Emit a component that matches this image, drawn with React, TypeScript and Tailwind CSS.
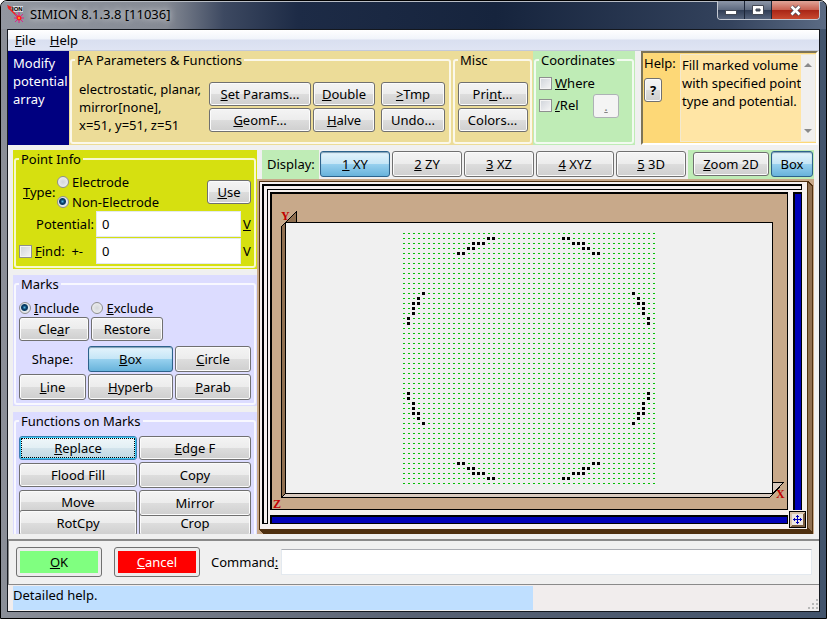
import React from "react";

type BtnProps = {
  children: React.ReactNode;
  className?: string;
  active?: boolean;
  focused?: boolean;
  disabled?: boolean;
};

function Btn({ children, className = "", active, focused, disabled }: BtnProps) {
  let skin =
    "border-[#707070] bg-[linear-gradient(#f4f4f4,#ececec_50%,#dddddd_50%,#cfcfcf)] shadow-[inset_0_0_0_1px_#fbfbfb]";
  if (disabled) skin = "border-[#adb2b5] bg-[#f4f4f4] text-[#838383]";
  if (active)
    skin = "border-[#2c628b] bg-[linear-gradient(#e5f4fc,#c4e5f6_50%,#98d1ef_50%,#68b3db)] shadow-[inset_0_1px_1px_#7f9fb5]";
  if (focused)
    skin =
      "border-[#3c7fb1] bg-[linear-gradient(#f0f7fa,#e2eff4_50%,#d3e4ec_50%,#bfd8e3)] shadow-[inset_0_0_0_1px_#35c8f5] outline-1 outline-offset-[-3px] outline-dotted outline-black";
  return (
    <button
      type="button"
      disabled={disabled}
      className={`flex items-center justify-center whitespace-nowrap rounded-[3px] border ${skin} ${className}`}
    >
      <span>{children}</span>
    </button>
  );
}

function Group({
  title,
  className = "",
  children,
}: {
  title: string;
  className?: string;
  children: React.ReactNode;
}) {
  return (
    <div className={`px-px pb-px ${className}`}>
      <fieldset className="h-full min-w-0 rounded-[3px] border-2 border-white/80 px-[3px]">
        <legend className="px-0.5 leading-[18px]">{title}</legend>
        {children}
      </fieldset>
    </div>
  );
}

function Check({ id, children }: { id: string; children: React.ReactNode }) {
  return (
    <div className="flex items-center gap-[3px]">
      <input
        id={id}
        type="checkbox"
        className="size-[13px] shrink-0 appearance-none border border-[#8e8f8f] bg-[linear-gradient(135deg,#cfd3da,#f6f6f6)] shadow-[inset_0_0_0_1px_#f4f4f4]"
      />
      <label htmlFor={id} className="whitespace-nowrap">
        {children}
      </label>
    </div>
  );
}

function Radio({
  id,
  name,
  on,
  children,
}: {
  id: string;
  name: string;
  on?: boolean;
  children: React.ReactNode;
}) {
  return (
    <div className="flex items-center gap-[3px]">
      <input
        id={id}
        name={name}
        type="radio"
        defaultChecked={on}
        className="size-3 shrink-0 appearance-none rounded-full border border-[#8e8f8f] bg-[radial-gradient(circle,#d4d7db,#f4f4f4)] checked:bg-[radial-gradient(circle_at_45%_45%,#4fb4e0_0,#0b3d66_2px,#0b3d66_3px,#e4e8ec_4px)]"
      />
      <label htmlFor={id} className="whitespace-nowrap">
        {children}
      </label>
    </div>
  );
}

const N = 50;
const arc: [number, number][] = [
  [11, 4], [12, 4], [13, 3], [14, 3], [14, 2], [15, 2], [16, 2], [17, 1], [18, 1],
  [4, 12], [3, 13], [2, 14], [3, 14], [2, 15], [2, 16], [1, 17], [1, 18],
];
const marked = arc.flatMap(([x, y]) => [
  [x, y],
  [N - x, y],
  [x, N - y],
  [N - x, N - y],
]);

function View() {
  return (
    <svg
      viewBox="257 179 557 355"
      className="block w-full"
      shapeRendering="crispEdges"
      role="img"
      aria-label="XY view of the potential array"
    >
      <rect x="257" y="179" width="557" height="355" fill="#c8a98a" />
      <path d="M259 181H809L813 186V534H263L259 529Z" fill="#4f3010" />
      <rect x="260" y="182" width="547" height="347" fill="#f6f0ee" />
      <path d="M808 182L812 187V532L808 528Z" fill="#8f6f50" />
      <path d="M262 184H802V190H268V524H262Z" fill="#000" />
      <path d="M264 186H801V189H267V523H264Z" fill="#f6f0ee" />
      <rect x="270" y="192" width="518" height="318" fill="#000" />
      <rect x="272" y="194" width="515" height="315" fill="#c8a98a" />
      <rect x="793" y="192" width="9" height="318" fill="#000" />
      <rect x="795" y="194" width="6" height="316" fill="#0000b8" />
      <rect x="270" y="515" width="518" height="9" fill="#000" />
      <rect x="272" y="517" width="515" height="6" fill="#0000b8" />

      <rect x="789" y="511" width="17" height="17" fill="#000" />
      <rect x="790" y="512" width="15" height="15" fill="#d9c3ab" />
      <path d="M805 512V527H790L792 525H803V514Z" fill="#7a5c40" />
      <rect x="792" y="514" width="11" height="11" fill="#ece6e2" />
      <path
        d="M797 515h1v9h-1zM793 519h9v1h-9zM796 516h3v1h-3zM796 522h3v1h-3zM794 518h1v3h-1zM800 518h1v3h-1z"
        fill="#0000b8"
      />

      <path d="M281 226L285 222V494L281 498Z" fill="#8f6f50" />
      <path d="M285 222L296 211V222Z" fill="#8f6f50" />
      <path d="M281 498L285 494H773V482H784L769 498Z" fill="#d8cabf" />
      <rect x="285.5" y="222.5" width="487" height="271" fill="#f0f0f0" stroke="#000" />
      <path
        d="M281.5 497.5V226.5L296.5 211.5V222M281.5 497.5H769.5L783.5 482.5H773M281.5 497.5L285.5 493.5"
        fill="none"
        stroke="#000"
      />
      <g fill="#c00000" fontFamily="Liberation Serif, serif" fontWeight="bold" fontSize="12">
        <text x="281" y="220">Y</text>
        <text x="273" y="508">Z</text>
        <text x="776" y="498">X</text>
      </g>
      {Array.from({ length: N + 1 }, (_, j) => (
        <path
          key={j}
          d={`M403 ${233.5 + 5 * j}H655`}
          stroke="#00c000"
          strokeDasharray="2 3"
        />
      ))}
      {marked.map(([x, y]) => (
        <rect key={`${x}-${y}`} x={402 + 5 * x} y={232 + 5 * y} width="3" height="3" fill="#000" />
      ))}
    </svg>
  );
}

function AppIcon() {
  return (
    <svg width="17" height="18" viewBox="0 0 17 18" aria-hidden="true">
      <rect x="6" y="1" width="10" height="6" fill="#d8d8dc" />
      <path d="M1 2L11 12" stroke="#f02020" strokeWidth="1.5" />
      <path d="M0 0L5 2L2 5Z" fill="#f02020" />
      <path d="M12 7V18M7 13H17M8 9L16 17M16 9L8 17" stroke="#e02090" />
      <circle cx="12" cy="13" r="2.5" fill="#ff2020" />
      <circle cx="12" cy="13" r="1" fill="#ffb020" />
      <text x="5" y="6" fontSize="6" fontWeight="bold" fontFamily="Liberation Sans, sans-serif">
        ION
      </text>
    </svg>
  );
}

export default function App() {
  return (
    <div className="flex min-h-screen flex-col overflow-hidden rounded-t-[7px] border border-black bg-[linear-gradient(90deg,#8b8f98,#596273_50%,#42546c)] font-['Noto_Sans',sans-serif] text-[13px] leading-[18px] text-black">
      <header className="flex h-[28px] items-start justify-between bg-[linear-gradient(90deg,#9297a0,#858a94_20%,#3d4961_27%,#1d2b46_36%,#16243d_60%,#33425c_88%,#5b6b84)] px-1.5 shadow-[inset_0_1px_0_#b8bdc5]">
        <div className="flex h-full items-center gap-1.5 pb-0.5">
          <AppIcon />
          <h1 className="[text-shadow:0_0_6px_#ffffff]">SIMION 8.1.3.8 [11036]</h1>
        </div>
        <div className="flex h-[19px] overflow-hidden rounded-b-[4px] border border-t-0 border-[#c5cad3]">
          <button
            type="button"
            aria-label="Minimize"
            className="flex w-[27px] items-center justify-center border-r border-[#1c2638] bg-[linear-gradient(#8d97a8,#5d697e_50%,#2f3c54_50%,#55637b)]"
          >
            <svg width="12" height="6" viewBox="0 0 12 6" className="mt-1.5">
              <rect x="0.5" y="0.5" width="11" height="4" fill="#fff" stroke="#454a55" />
            </svg>
          </button>
          <button
            type="button"
            aria-label="Maximize"
            className="flex w-[27px] items-center justify-center border-r border-[#1c2638] bg-[linear-gradient(#8d97a8,#5d697e_50%,#2f3c54_50%,#55637b)]"
          >
            <svg width="12" height="10" viewBox="0 0 12 10">
              <path d="M0.5 0.5H11.5V9.5H0.5ZM4 4V6H8V4Z" fill="#fff" fillRule="evenodd" stroke="#454a55" />
            </svg>
          </button>
          <button
            type="button"
            aria-label="Close"
            className="flex w-[47px] items-center justify-center bg-[linear-gradient(#e0a598,#c9604f_50%,#a82415_50%,#c8492f)]"
          >
            <svg width="13" height="11" viewBox="0 0 13 11">
              <path d="M2.500 1.500L10.500 9.500M10.500 1.500L2.500 9.500" stroke="#4a4a55" strokeWidth="4" />
              <path d="M2.500 1.500L10.500 9.500M10.500 1.500L2.500 9.500" stroke="#fff" strokeWidth="2.500" />
            </svg>
          </button>
        </div>
      </header>

      <div className="mx-1.5 mb-1.5 flex grow flex-col border border-[#14181f] bg-[#f0f0f0]">
        <nav className="flex h-[21px] items-center gap-3.5 border-b border-[#c3c9da] bg-[linear-gradient(#ffffff,#f1f4fa_45%,#d9dff0_50%,#dfe4f3)] px-[7px]">
          <button type="button">
            <u>F</u>ile
          </button>
          <button type="button">
            <u>H</u>elp
          </button>
        </nav>

        <section className="flex h-[94px]">
          <div className="w-[61px] shrink-0 bg-[#000080] px-[5px] pt-[3px] text-white">
            Modify potential array
          </div>
          <Group title="PA Parameters & Functions" className="grow bg-[#ecdc98]">
            <div className="flex justify-between pl-1 pr-px pt-[11px]">
              <p className="whitespace-nowrap">
                electrostatic, planar,
                <br />
                mirror[none],
                <br />
                x=51, y=51, z=51
              </p>
              <div className="flex gap-0.5 pt-0.5">
                <div className="flex flex-col gap-0.5">
                  <Btn className="h-6 w-[102px]"><u>S</u>et Params...</Btn>
                  <Btn className="h-6 w-[102px]"><u>G</u>eomF...</Btn>
                </div>
                <div className="mr-1 flex flex-col gap-0.5">
                  <Btn className="h-6 w-[62px]"><u>D</u>ouble</Btn>
                  <Btn className="h-6 w-[62px]"><u>H</u>alve</Btn>
                </div>
                <div className="flex flex-col gap-0.5">
                  <Btn className="h-6 w-16"><u>&gt;</u>Tmp</Btn>
                  <Btn className="h-6 w-16">Undo...</Btn>
                </div>
              </div>
            </div>
          </Group>
          <Group title="Misc" className="w-[81px] shrink-0 bg-[#ecdc98]">
            <div className="flex flex-col items-center gap-0.5 pt-[13px]">
              <Btn className="h-6 w-[70px]">Pri<u>n</u>t...</Btn>
              <Btn className="h-6 w-[70px]">Colors...</Btn>
            </div>
          </Group>
          <Group title="Coordinates" className="w-[102px] shrink-0 bg-[#bfecb6]">
            <div className="pt-[5px]">
              <Check id="where"><u>W</u>here</Check>
              <div className="flex items-center justify-between pr-2.5">
                <Check id="rel"><u>/</u>Rel</Check>
                <Btn disabled className="mt-0.5 h-6 w-[26px]"><u>.</u></Btn>
              </div>
            </div>
          </Group>
          <aside className="ml-1.5 mr-px flex w-[177px] shrink-0 gap-0.5 border-2 border-b-white border-l-[#7c7458] border-r-white border-t-[#7c7458] bg-[#fdd877] pl-px">
            <div className="w-[34px] shrink-0 pt-px">
              <div className="mb-1.5">Help:</div>
              <Btn className="h-6 w-[18px] font-bold">?</Btn>
            </div>
            <div className="my-px mr-px flex grow border border-[#f3e9cf] bg-[#ffe5a5]">
              <p className="grow whitespace-nowrap pl-px pt-px">
                Fill marked volume
                <br />
                with specified point
                <br />
                type and potential.
              </p>
              <div className="flex w-3.5 shrink-0 flex-col items-center justify-between bg-[#f1f0ee] py-2">
                <span className="border-x-4 border-b-4 border-x-transparent border-b-[#8a8a8a]" />
                <span className="border-x-4 border-t-4 border-x-transparent border-t-[#8a8a8a]" />
              </div>
            </div>
          </aside>
        </section>

        <main className="flex pl-[5px] pr-[5px] pt-[5px]">
          <div className="flex w-[244px] shrink-0 flex-col gap-1.5">
            <Group title="Point Info" className="h-[119px] bg-[#d6e010]">
              <div className="flex h-[42px] items-center pl-1 pt-1.5">
                <span className="w-[34px]"><u>T</u>ype:</span>
                <div className="flex grow flex-col gap-0.5">
                  <Radio id="el" name="type">Electrode</Radio>
                  <Radio id="nel" name="type" on>Non-Electrode</Radio>
                </div>
                <Btn className="h-6 w-11"><u>U</u>se</Btn>
              </div>
              <div className="mt-px grid grid-cols-[75px_1fr_8px] items-center gap-x-0.5 gap-y-px">
                <label htmlFor="pot" className="whitespace-nowrap text-right">Potential:</label>
                <input id="pot" defaultValue="0" className="h-[26px] w-full min-w-0 border border-[#e3e9ef] bg-white px-[5px]" />
                <u>V</u>
                <Check id="find"><u>F</u>ind:&nbsp; +-</Check>
                <input aria-label="Find tolerance" defaultValue="0" className="h-[26px] w-full min-w-0 border border-[#e3e9ef] bg-white px-[5px]" />
                <span>V</span>
              </div>
            </Group>

            <Group title="Marks" className="h-[131px] bg-[#dcdcff]">
              <div className="flex gap-3 pt-1.5">
                <Radio id="inc" name="marks" on><u>I</u>nclude</Radio>
                <Radio id="exc" name="marks"><u>E</u>xclude</Radio>
              </div>
              <div className="flex gap-0.5">
                <Btn className="h-6 w-[70px]">Cle<u>a</u>r</Btn>
                <Btn className="h-6 w-[72px]">Restore</Btn>
              </div>
              <div className="mt-[5px] grid grid-cols-[67px_85px_1fr] gap-0.5">
                <span className="self-center text-center">Shape:</span>
                <Btn active className="h-[26px]"><u>B</u>ox</Btn>
                <Btn className="h-[26px]"><u>C</u>ircle</Btn>
                <Btn className="h-[26px]"><u>L</u>ine</Btn>
                <Btn className="h-[26px]"><u>H</u>yperb</Btn>
                <Btn className="h-[26px]"><u>P</u>arab</Btn>
              </div>
            </Group>

            <div className="h-[122px] overflow-hidden bg-[#dcdcff]">
              <Group title="Functions on Marks" className="h-[136px]">
                <div className="grid grid-cols-[118px_1fr] gap-0.5 pt-1.5">
                  <div className="flex flex-col">
                    <Btn focused className="h-6"><u>R</u>eplace</Btn>
                    <Btn className="mt-[3px] h-6">Flood Fill</Btn>
                    <Btn className="mt-[3px] h-6">Move</Btn>
                    <Btn className="-mt-1 h-[26px]">RotCpy</Btn>
                  </div>
                  <div className="flex flex-col">
                    <Btn className="h-6"><u>E</u>dge F</Btn>
                    <Btn className="mt-0.5 h-[26px]">Copy</Btn>
                    <Btn className="z-10 mt-0.5 h-[26px]">Mirror</Btn>
                    <Btn className="-mt-1.5 h-[26px]">Crop</Btn>
                  </div>
                </div>
              </Group>
            </div>
          </div>

          <div className="min-w-0 grow">
            <div className="flex h-[29px] pl-[5px]">
              <span className="flex w-[57px] shrink-0 items-center bg-[#bfecb6] pb-0.5 pl-[5px]">Display:</span>
              <div className="flex grow gap-0.5 pl-px pt-px">
                <Btn active className="h-[26px] w-[70px]"><u>1</u>&nbsp;XY</Btn>
                <Btn className="h-[26px] w-[70px]"><u>2</u>&nbsp;ZY</Btn>
                <Btn className="h-[26px] w-[70px]"><u>3</u>&nbsp;XZ</Btn>
                <Btn className="h-[26px] w-[78px]"><u>4</u>&nbsp;XYZ</Btn>
                <Btn className="h-[26px] w-[70px]"><u>5</u>&nbsp;3D</Btn>
              </div>
              <div className="flex shrink-0 items-center gap-0.5 bg-[#bfecb6] pb-px pl-[5px] pr-px">
                <Btn className="h-6 w-[76px]"><u>Z</u>oom 2D</Btn>
                <Btn active className="h-[26px] w-[42px]">Box</Btn>
              </div>
            </div>
            <View />
          </div>
        </main>

        <footer className="mt-[5px]">
          <div className="flex h-[45px] items-center border-t-2 border-l border-[#8a8a8a] px-[7px] pb-0.5">
            <button type="button" className="h-[30px] w-[86px] rounded-[3px] border border-[#707070] bg-[#ececec] p-[3px]">
              <span className="flex h-full items-center justify-center bg-[#80ff80]"><span><u>O</u>K</span></span>
            </button>
            <button type="button" className="ml-3 mr-[11px] h-[30px] w-[86px] rounded-[3px] border border-[#707070] bg-[#ececec] p-[3px] text-white">
              <span className="flex h-full items-center justify-center bg-[#ff0000]"><span><u>C</u>ancel</span></span>
            </button>
            <label htmlFor="cmd" className="w-[70px]">Command<u>:</u></label>
            <input id="cmd" className="h-[26px] min-w-0 grow border border-[#e3e9ef] border-t-[#abadb3] bg-white px-1" />
          </div>
          <div className="flex h-[26px] items-stretch border-t border-[#8a8a8a] bg-[#f1eded] pl-[5px] pt-px">
            <div className="w-[520px] bg-[#bfdfff]">Detailed help.</div>
            <svg width="11" height="11" viewBox="0 0 11 11" className="ml-auto self-end" fill="#b8b8b8" aria-hidden="true">
              <path d="M8 0h2v2h-2zM4 4h2v2h-2zM8 4h2v2h-2zM0 8h2v2h-2zM4 8h2v2h-2zM8 8h2v2h-2z" />
            </svg>
          </div>
        </footer>
      </div>
    </div>
  );
}
